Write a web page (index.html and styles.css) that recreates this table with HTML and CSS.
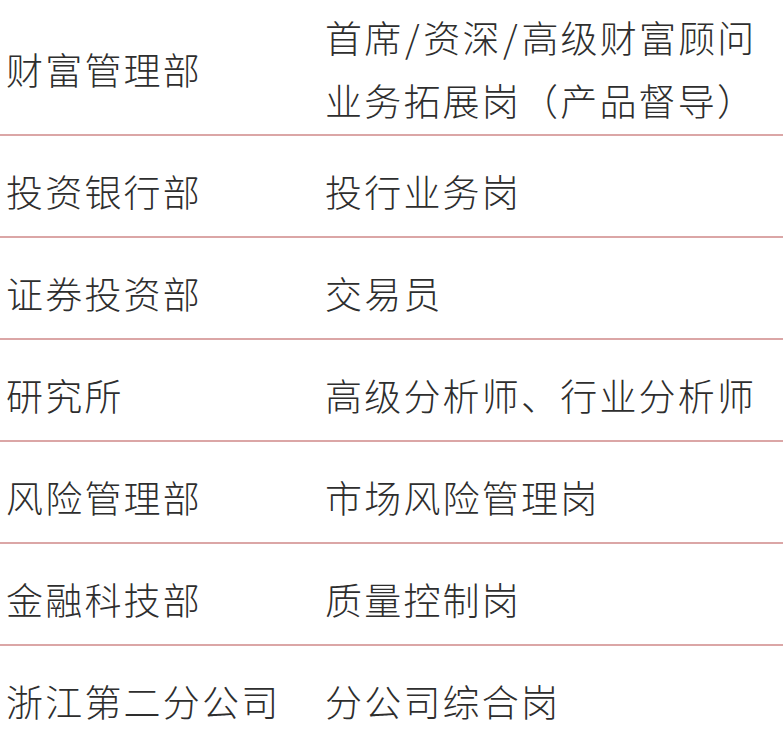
FILE: index.html
```html
<!DOCTYPE html>
<html lang="zh-CN">
<head>
<meta charset="utf-8">
<link rel="stylesheet" href="styles.css">
</head>
<body>
<div class="table">
  <div class="row first">
    <div class="dept">财富管理部</div>
    <div class="posts">
      <div class="post">首席<span class="slash">/</span>资深<span class="slash">/</span>高级财富顾问</div>
      <div class="post">业务拓展岗（产品督导）</div>
    </div>
  </div>
  <div class="row">
    <div class="dept">投资银行部</div>
    <div class="posts"><div class="post">投行业务岗</div></div>
  </div>
  <div class="row">
    <div class="dept">证券投资部</div>
    <div class="posts"><div class="post">交易员</div></div>
  </div>
  <div class="row">
    <div class="dept">研究所</div>
    <div class="posts"><div class="post">高级分析师、行业分析师</div></div>
  </div>
  <div class="row">
    <div class="dept">风险管理部</div>
    <div class="posts"><div class="post">市场风险管理岗</div></div>
  </div>
  <div class="row">
    <div class="dept">金融科技部</div>
    <div class="posts"><div class="post">质量控制岗</div></div>
  </div>
  <div class="row last">
    <div class="dept">浙江第二分公司</div>
    <div class="posts"><div class="post">分公司综合岗</div></div>
  </div>
</div>
</body>
</html>
```

FILE: styles.css
```css
html, body {
  margin: 0;
  padding: 0;
  background: #ffffff;
}
body {
  font-family: "Noto Sans CJK SC", "Noto Sans", sans-serif;
  font-weight: 300;
  color: #2e2e2e;
  font-size: 37px;
  letter-spacing: 2.2px;
  width: 783px;
  height: 738px;
  overflow: hidden;
}
.table {
  display: flex;
  flex-direction: column;
}
.row {
  display: flex;
  align-items: center;
  border-bottom: 2px solid #dba6a6;
  padding-left: 6px;
  padding-top: 10px;
  box-sizing: border-box;
  height: 102px;
}
.row.first {
  height: 136px;
  padding-top: 4px;
}
.row.last {
  border-bottom: none;
  height: 94px;
  padding-top: 16px;
}
.dept {
  width: 319px;
  flex: none;
  line-height: 1;
}
.posts {
  display: flex;
  flex-direction: column;
  gap: 26px;
}
.post {
  line-height: 1;
  white-space: nowrap;
}
.slash {
  margin: 0 1.5px;
}
```
